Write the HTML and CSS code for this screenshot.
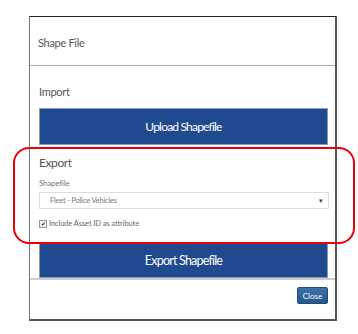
FILE: index.html
```html
<!DOCTYPE html>
<html lang="en">
<head>
    <meta charset="UTF-8">
    <title>Shape File</title>
    <link rel="stylesheet" href="styles.css">
</head>
<body>
    <div class="modal">
        <div class="modal-header">Shape File</div>
        <div class="modal-body">
            <div class="section-title">Import</div>
            <button class="big-btn">Upload Shapefile</button>
            <div class="export">
                <div class="section-title export-title">Export</div>
                <div class="field-label">Shapefile</div>
                <div class="select">
                    <span>Fleet - Police Vehicles</span>
                    <span class="caret">&#9662;</span>
                </div>
                <label class="check">
                    <span class="box">&#10004;</span>
                    Include Asset ID as attribute
                </label>
            </div>
            <button class="big-btn export-btn">Export Shapefile</button>
        </div>
        <div class="modal-footer">
            <button class="close-btn">Close</button>
        </div>
        <div class="highlight"></div>
    </div>
</body>
</html>
```

FILE: styles.css
```css
body {
    margin: 0;
    background: #fff;
    font-family: Lato, "Open Sans", sans-serif;
}
.modal {
    position: relative;
    margin: 16px 0 0 29px;
    width: 305px;
    height: 302px;
    background: #fff;
    border: 1px solid #777;
    border-top-color: #222;
    border-right: 2px solid #555;
    border-bottom: 2px solid #555;
    display: flex;
    flex-direction: column;
}
.modal-header {
    height: 49px;
    box-sizing: border-box;
    padding: 19px 0 0 8px;
    font-size: 11px;
    letter-spacing: -0.3px;
    color: #555;
    border-bottom: 1px solid #aaa;
}
.modal-body {
    padding: 18px 8px 0 9px;
    flex: 1;
}
.section-title {
    font-size: 11px;
    letter-spacing: -0.3px;
    color: #555;
    height: 24px;
    padding-top: 1px;
    box-sizing: border-box;
}
.big-btn {
    display: block;
    width: 289px;
    height: 37px;
    border: 1px solid #8a9bb4;
    background: #1f4a8f;
    color: #fff;
    font-family: Lato, sans-serif;
    font-size: 12px;
    letter-spacing: -0.8px;
    padding: 0;
}
.export {
    padding-top: 9px;
    height: 97px;
    box-sizing: border-box;
}
.export-title {
    font-size: 12px;
    letter-spacing: -0.4px;
    height: 24px;
}
.field-label {
    font-size: 8px;
    color: #777;
    height: 14px;
    letter-spacing: -0.2px;
}
.select {
    width: 290px;
    height: 17px;
    box-sizing: border-box;
    border: 1px solid #ddd;
    display: flex;
    justify-content: space-between;
    align-items: center;
    padding: 0 5px 0 10px;
    font-size: 7.5px;
    letter-spacing: -0.2px;
    color: #777;
}
.caret {
    font-size: 7px;
    color: #444;
}
.check {
    display: flex;
    align-items: center;
    gap: 2px;
    margin-top: 10px;
    font-size: 7.5px;
    letter-spacing: -0.1px;
    color: #666;
}
.box {
    width: 6px;
    height: 6px;
    border: 1px solid #999;
    font-size: 6px;
    line-height: 6px;
    text-align: center;
    color: #333;
    background: #eee;
}
.export-btn {
    height: 36px;
    font-size: 12.5px;
}
.modal-footer {
    height: 32px;
    border-top: 2px solid #ccc;
    display: flex;
    justify-content: flex-end;
    align-items: flex-start;
    padding: 7px 7px 0 0;
}
.close-btn {
    width: 31px;
    height: 17px;
    padding: 0;
    border: 1px solid #1f4a7a;
    border-radius: 2px;
    background: linear-gradient(#3a73a8, #24578c);
    color: #fff;
    font-family: Lato, sans-serif;
    font-size: 8px;
}
.highlight {
    position: absolute;
    left: -17px;
    top: 130px;
    width: 338px;
    height: 93px;
    border: 2px solid #e8000a;
    border-radius: 16px;
    pointer-events: none;
}
```
